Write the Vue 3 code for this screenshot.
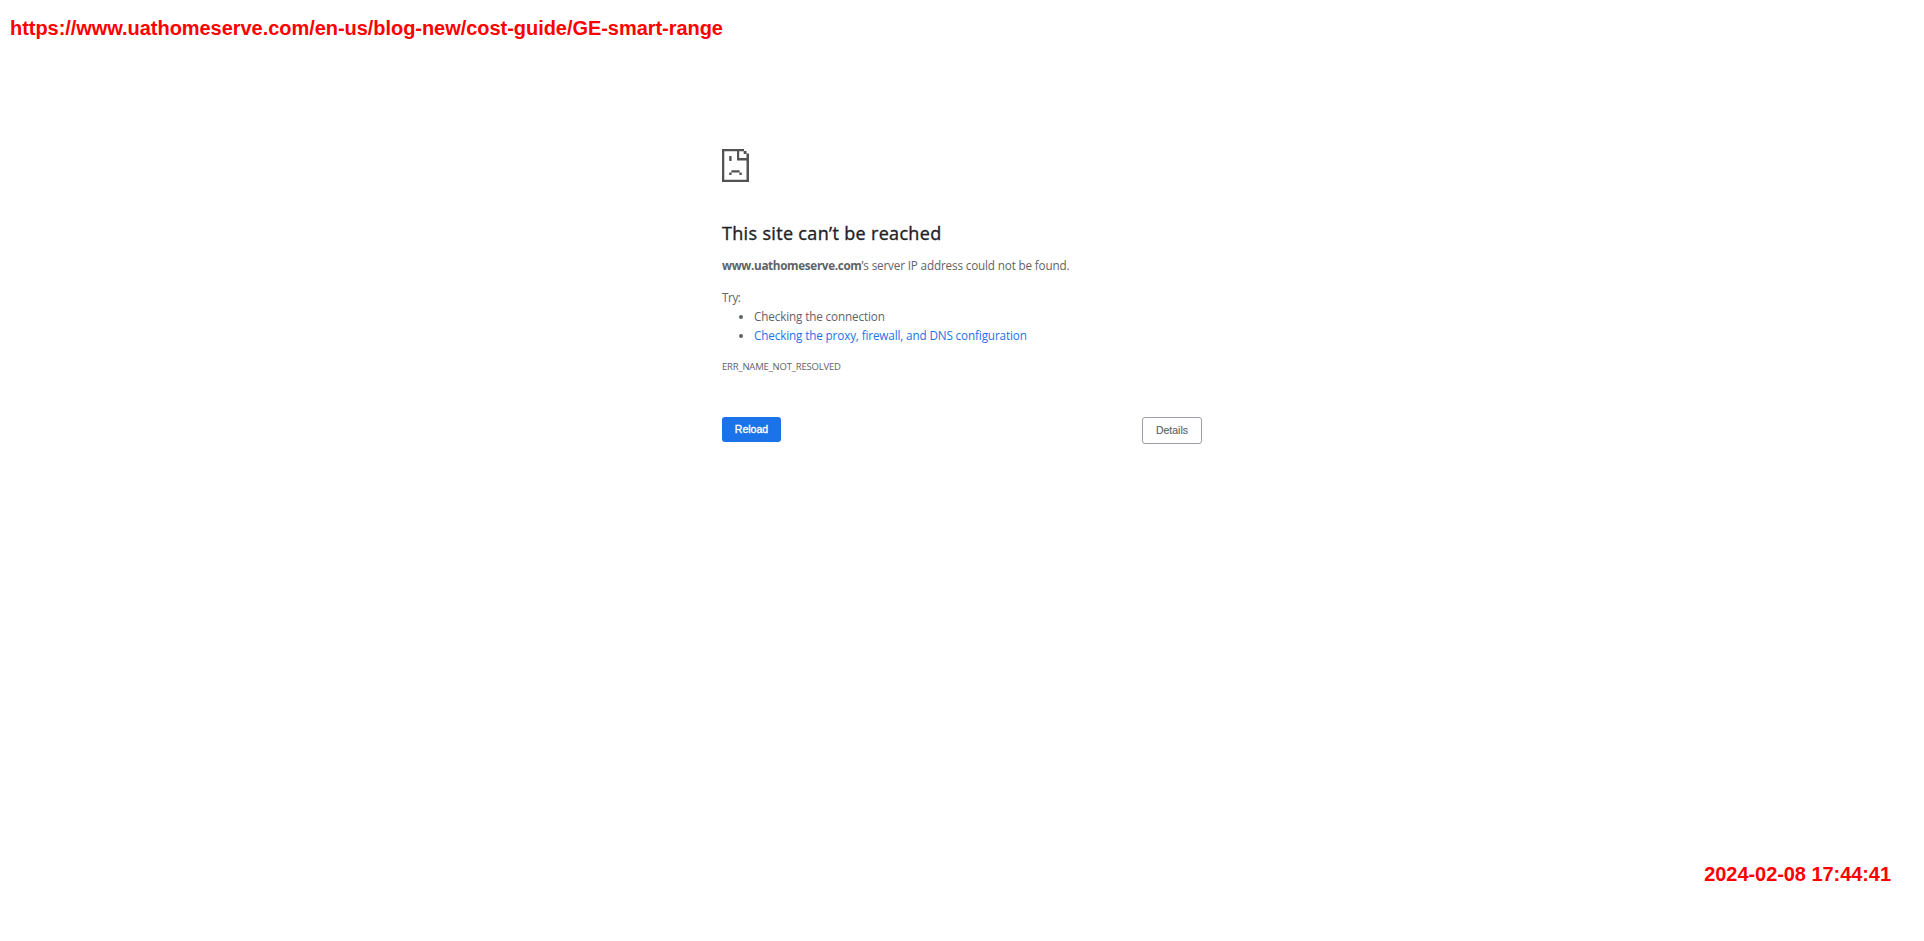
<script setup>
const url = 'https://www.uathomeserve.com/en-us/blog-new/cost-guide/GE-smart-range'
const stamp = '2024-02-08 17:44:41'
</script>

<template>
  <div class="page">
    <header class="url">{{ url }}</header>
    <main class="error">
      <svg class="icon" width="27" height="33" viewBox="0 0 27 33">
        <path fill="#535353" fill-rule="evenodd" d="M0 0H22V2H24.5V4.6H27V33H0ZM2.3 2.3V30.7H24.5V11.4H15V2.3ZM17.2 2.3V9.1H24.5V4.9H21.7V2.3Z" />
        <path fill="#535353" d="M7.2 7H9.6V12H7.2ZM9.4 21.3H17.6V23.6H9.4ZM7.2 23.6H9.6V26H7.2ZM17.4 23.6H19.8V26H17.4Z" />
      </svg>
      <h1>This site can’t be reached</h1>
      <p class="summary"><strong>www.uathomeserve.com</strong>’s server IP address could not be found.</p>
      <p class="try">Try:</p>
      <ul>
        <li>Checking the connection</li>
        <li><a>Checking the proxy, firewall, and DNS configuration</a></li>
      </ul>
      <p class="code">ERR_NAME_NOT_RESOLVED</p>
      <div class="buttons">
        <button class="reload">Reload</button>
        <button class="details">Details</button>
      </div>
    </main>
    <footer class="stamp">{{ stamp }}</footer>
  </div>
</template>

<style>
body { margin: 0; background: #fff; }
</style>

<style scoped>
.page {
  height: 941px;
  display: flex;
  flex-direction: column;
  overflow: hidden;
  background: #fff;
  font-family: "Open Sans", "Noto Sans", sans-serif;
  color: #5f6368;
}
.url, .stamp {
  font: bold 20px/24px "Liberation Sans", Arial, sans-serif;
  color: #f00;
  white-space: nowrap;
}
.url { padding: 16px 0 0 10px; letter-spacing: -0.045px; }
.error {
  width: 480px;
  margin: 109px auto 0;
  font-size: 11.7px;
  line-height: 19px;
  letter-spacing: -0.13px;
  white-space: nowrap;
}
.icon { display: block; }
h1 {
  margin: 39px 0 0;
  font-size: 18px;
  line-height: 25px;
  font-weight: 500;
  letter-spacing: 0.33px;
  color: #202124;
  -webkit-text-stroke: 0.35px #202124;
}
p { margin: 0; }
.summary { margin-top: 10px; letter-spacing: -0.15px; }
.summary strong { letter-spacing: -0.33px; }
.try { margin-top: 13px; letter-spacing: -0.4px; }
ul { margin: 0; padding: 0 0 0 32px; list-style: none; }
li { position: relative; }
li::before {
  content: "";
  position: absolute;
  left: -15px;
  top: 8px;
  width: 4px;
  height: 4px;
  border-radius: 50%;
  background: #5f6368;
}
a { color: #1a73e8; }
.code { margin-top: 13px; font-size: 9.5px; line-height: 18px; letter-spacing: -0.19px; }
.buttons {
  display: flex;
  justify-content: space-between;
  align-items: flex-start;
  margin-top: 41px;
}
button {
  box-sizing: border-box;
  margin: 0;
  padding: 0;
  border-radius: 3px;
  font: 500 10.5px/25px "Liberation Sans", Arial, sans-serif;
  text-align: center;
}
.reload { width: 59px; height: 25px; border: 0; background: #1a73e8; color: #fff; -webkit-text-stroke: 0.35px #fff; }
.details { width: 60px; height: 27px; border: 1px solid #9aa0a6; background: #fff; color: #5f6368; -webkit-text-stroke: 0.15px #5f6368; }
.stamp { margin-top: auto; padding: 0 33px 55px 0; text-align: right; letter-spacing: -0.06px; }
</style>
